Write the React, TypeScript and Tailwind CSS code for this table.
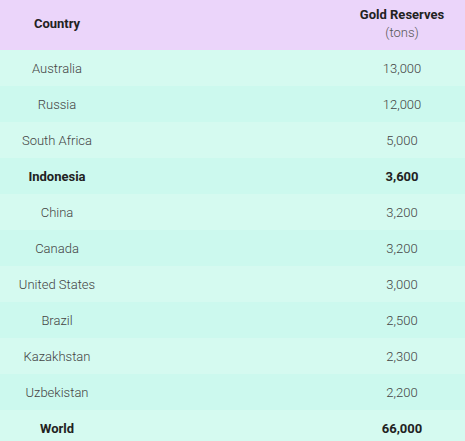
const rows: { country: string; tons: string; bold?: boolean }[] = [
  { country: "Australia", tons: "13,000" },
  { country: "Russia", tons: "12,000" },
  { country: "South Africa", tons: "5,000" },
  { country: "Indonesia", tons: "3,600", bold: true },
  { country: "China", tons: "3,200" },
  { country: "Canada", tons: "3,200" },
  { country: "United States", tons: "3,000" },
  { country: "Brazil", tons: "2,500" },
  { country: "Kazakhstan", tons: "2,300" },
  { country: "Uzbekistan", tons: "2,200" },
  { country: "World", tons: "66,000", bold: true },
];

export default function App() {
  return (
    <div className="h-[441px] w-[465px] overflow-hidden bg-white font-['Roboto',sans-serif] text-[13px]">
      <div className="flex h-[50px] items-center bg-[#ebd5fa] pb-[2px] text-[#222]">
        <div className="w-[114px] text-center font-bold">Country</div>
        <div className="ml-auto w-[126px] text-center leading-[18px]">
          <div className="font-bold">Gold Reserves</div>
          <div className="font-light text-[#555]">(tons)</div>
        </div>
      </div>
      {rows.map((r, i) => (
        <div
          key={r.country}
          className={
            "flex h-9 items-center pt-[2px] " +
            (i % 2 === 0 ? "bg-[#d5faf0]" : "bg-[#ccf9ee]") +
            (r.bold ? " font-bold text-[#222]" : " font-light text-[#444]")
          }
        >
          <div className="w-[114px] text-center">{r.country}</div>
          <div className="ml-auto w-[126px] text-center">{r.tons}</div>
        </div>
      ))}
    </div>
  );
}
